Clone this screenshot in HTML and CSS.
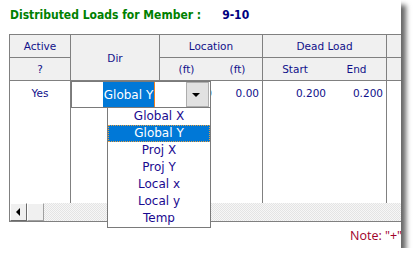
FILE: index.html
```html
<!DOCTYPE html>
<html>
<head>
<meta charset="utf-8">
<link rel="stylesheet" href="styles.css">
</head>
<body>
<div class="win">
  <div class="title">
    <span class="title-label">Distributed Loads for Member :</span>
    <span class="title-member">9-10</span>
  </div>
  <div class="grid">
    <div class="cell hd br bb c1">Active</div>
    <div class="cell hd br bb dir">Dir</div>
    <div class="cell hd br bb loc">Location</div>
    <div class="cell hd br bb dead">Dead Load</div>
    <div class="cell hd bb c7"></div>

    <div class="cell hd br bb">?</div>
    <div class="cell hd bb">(ft)</div>
    <div class="cell hd br bb">(ft)</div>
    <div class="cell hd bb">Start</div>
    <div class="cell hd br bb">End</div>
    <div class="cell hd bb"></div>

    <div class="cell dt br center">Yes</div>
    <div class="cell dt br"></div>
    <div class="cell dt num n1">0.00</div>
    <div class="cell dt br num n2">0.00</div>
    <div class="cell dt num n1">0.200</div>
    <div class="cell dt br num n2">0.200</div>
    <div class="cell dt"></div>

    <div class="hscroll">
      <div class="sbtn"><span class="larrow"></span></div>
      <div class="sthumb"></div>
      <div class="strack"></div>
    </div>
  </div>
  <div class="note">Note: "+" </div>

  <div class="combo">
    <div class="combo-edit"><span class="combo-sel">Global Y</span><span class="caret"></span></div>
    <div class="combo-btn"><span class="darrow"></span></div>
  </div>
  <ul class="list">
    <li>Global X</li>
    <li class="on">Global Y</li>
    <li>Proj X</li>
    <li>Proj Y</li>
    <li>Local x</li>
    <li>Local y</li>
    <li>Temp</li>
  </ul>
</div>
</body>
</html>
```
FILE: styles.css
```css
html, body {
  margin: 0;
  padding: 0;
  background: #ffffff;
}
.win {
  position: relative;
  width: 401px;
  height: 248px;
  background: #ffffff;
  box-shadow: 5px 5px 5px rgba(0, 0, 0, 0.6);
  overflow: hidden;
  font-family: "DejaVu Sans", sans-serif;
}
.title {
  display: flex;
  height: 34px;
  box-sizing: border-box;
  padding: 8px 0 0 10px;
  font-family: "DejaVu Sans Condensed", "DejaVu Sans", sans-serif;
  font-stretch: condensed;
  font-weight: bold;
  font-size: 12px;
  line-height: 14px;
}
.title-label {
  color: #008000;
}
.title-member {
  color: #000080;
  margin-left: 21px;
}
.grid {
  display: grid;
  grid-template-columns: 61px 89px 53px 50px 64px 60px 40px;
  grid-template-rows: 23px 23px 122px 18px;
  margin-left: 9px;
  width: 500px;
  border-left: 1px solid #808080;
  border-top: 1px solid #808080;
  border-bottom: 1px solid #808080;
  font-size: 10.5px;
  color: #10108a;
}
.cell {
  box-sizing: border-box;
  white-space: nowrap;
  overflow: hidden;
}
.br { border-right: 1px solid #808080; }
.bb { border-bottom: 1px solid #808080; }
.hd {
  background: #f0f0f0;
  display: flex;
  align-items: center;
  justify-content: center;
}
.dir { grid-row: span 2; }
.loc { grid-column: span 2; }
.dead { grid-column: span 2; }
.dt {
  background: #ffffff;
  padding-top: 6px;
  line-height: 13px;
}
.center { text-align: center; }
.num { text-align: right; }
.n1 { padding-right: 1px; }
.n2 { padding-right: 3px; }
.hscroll {
  grid-column: 1 / -1;
  display: flex;
}
.sbtn, .sthumb {
  box-sizing: border-box;
  width: 17px;
  height: 18px;
  background: #f0f0f0;
  border: 1px solid;
  border-color: #ffffff #6a6a6a #6a6a6a #ffffff;
  display: flex;
  align-items: center;
  justify-content: center;
}
.sthumb {
  border-color: #ffffff #a0a0a0 #a0a0a0 #ffffff;
}
.larrow {
  width: 0;
  height: 0;
  border-top: 4px solid transparent;
  border-bottom: 4px solid transparent;
  border-right: 4px solid #000000;
  margin-right: 2px;
}
.strack {
  flex: 1;
  background: repeating-conic-gradient(#e4e4e4 0 25%, #f7f7f7 0 50%) 0 0 / 2px 2px;
}
.note {
  margin: 6px 0 0 350px;
  white-space: nowrap;
  color: #a0002a;
  font-family: "Open Sans", sans-serif;
  font-size: 12.5px;
  line-height: 16px;
}
.combo {
  position: absolute;
  left: 71px;
  top: 81px;
  width: 140px;
  height: 27px;
  box-sizing: border-box;
  border: 1px solid #7a7a7a;
  background: #ffffff;
  display: flex;
  padding: 0 1px 0 0;
}
.combo-edit {
  flex: 1;
  display: flex;
  align-items: stretch;
  justify-content: center;
  font-size: 12px;
}
.combo-sel {
  background: #0078d7;
  color: #ffffff;
  display: flex;
  align-items: center;
  padding: 0 1px 0 1px;
}
.caret {
  width: 1px;
  background: #f08020;
}
.combo-btn {
  box-sizing: border-box;
  width: 23px;
  background: #e1e1e1;
  border: 1px solid #adadad;
  display: flex;
  align-items: center;
  justify-content: center;
}
.darrow {
  width: 0;
  height: 0;
  border-left: 4px solid transparent;
  border-right: 4px solid transparent;
  border-top: 4px solid #000000;
  margin-right: 4px;
}
.list {
  position: absolute;
  left: 107px;
  top: 107px;
  width: 104px;
  height: 121px;
  box-sizing: border-box;
  margin: 0;
  padding: 0;
  list-style: none;
  border: 1px solid #7a7a7a;
  background: #ffffff;
  font-size: 12px;
  color: #1a0a90;
}
.list li {
  height: 17px;
  line-height: 17px;
  text-align: center;
}
.list li.on {
  background: #0078d7;
  color: #ffffff;
  outline: 1px dotted #e8a040;
  outline-offset: -1px;
}
```
